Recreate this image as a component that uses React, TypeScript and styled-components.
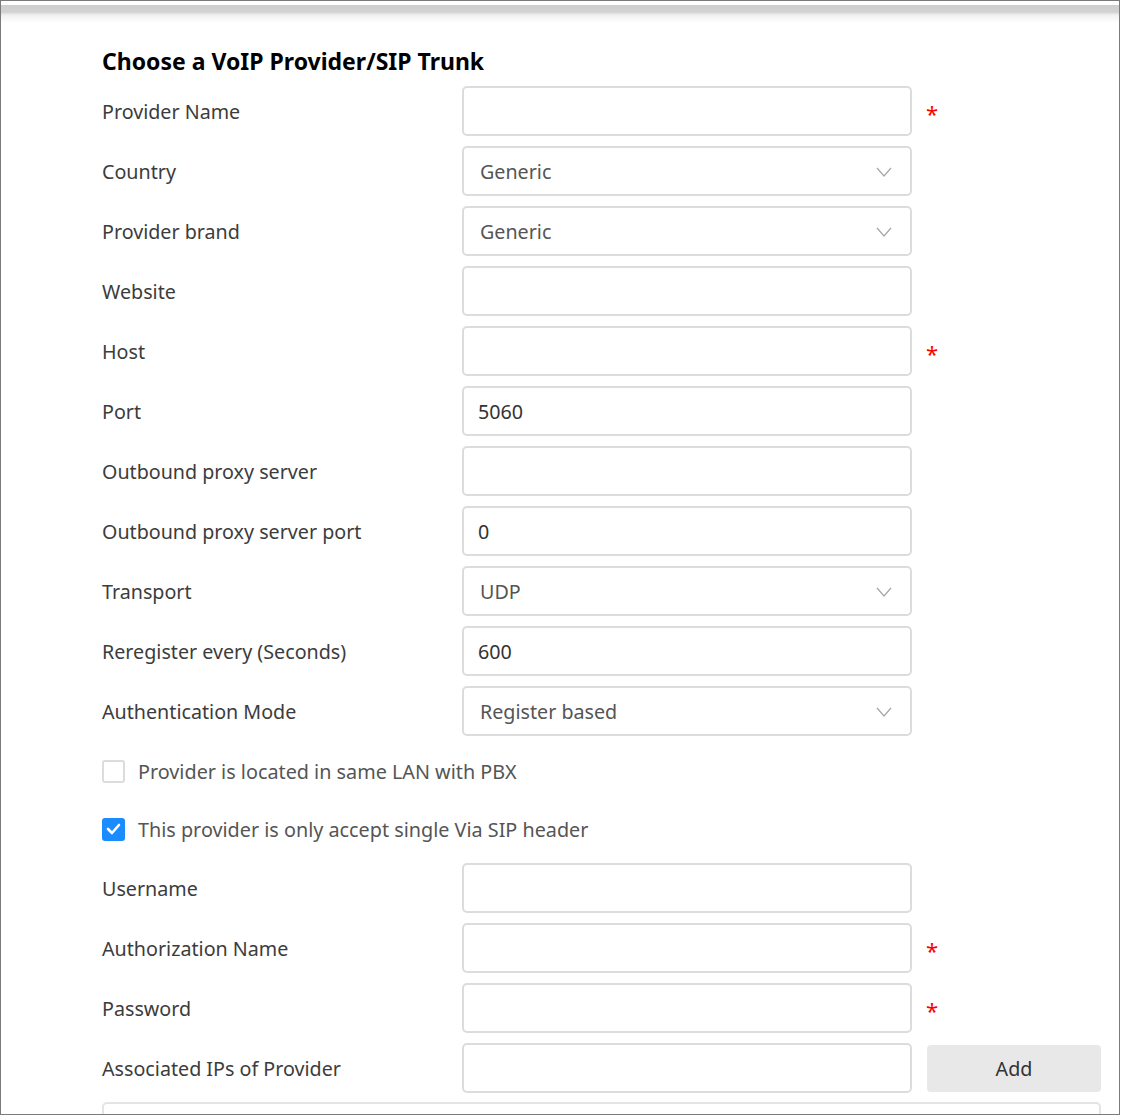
import React from "react";
import styled, { createGlobalStyle } from "styled-components";

const Global = createGlobalStyle`
  html, body { margin: 0; padding: 0; background: #fff; }
  body { font-family: "Segoe UI", "Noto Sans", "Open Sans", sans-serif; }
  * { box-sizing: border-box; }
`;

const Frame = styled.div`
  width: 1120px;
  height: 1115px;
  border: 1px solid #7a7a7a;
  overflow: hidden;
  background: #fff;
`;

const TopBand = styled.div`
  height: 18px;
  margin-top: 4px;
  background: linear-gradient(to bottom, #cfcfcf 0, #d2d2d2 7px, #f0f0f0 10px, #ffffff 18px);
`;

const Content = styled.div`
  padding-left: 101px;
`;

const Title = styled.h2`
  margin: 23px 0 10px;
  font-size: 23px;
  line-height: 30px;
  font-weight: 700;
  color: #000;
`;

const Form = styled.div`
  display: grid;
  grid-template-columns: 360px 450px 190px;
  row-gap: 10px;
  align-items: center;
`;

const Label = styled.div`
  font-size: 19.7px;
  color: #3c3c3c;
  line-height: 48px;
  padding-top: 2px;
`;

const TextInput = styled.div`
  height: 50px;
  border: 2px solid #dcdcdc;
  border-radius: 5px;
  padding: 1px 14px 0;
  display: flex;
  align-items: center;
  font-size: 19.7px;
  color: #333;
`;

const Select = styled(TextInput)`
  padding: 1px 18px 0 16px;
  justify-content: space-between;
  color: #555;
`;

const Side = styled.div`
  display: flex;
  align-items: center;
  height: 50px;
`;

const Required = styled.span`
  margin-left: 14px;
  color: #f00;
  font-size: 22px;
  line-height: 1;
  padding-top: 4px;
`;

const AddButton = styled.button`
  margin-left: 15px;
  width: 174px;
  height: 47px;
  border: none;
  border-radius: 4px;
  background: #e8e8e8;
  font-family: inherit;
  font-size: 19.7px;
  color: #333;
  padding: 1px 0 0;
`;

const CheckRow = styled.label<{ $first?: boolean }>`
  grid-column: 1 / 4;
  height: 48px;
  margin-top: ${(p) => (p.$first ? "1px" : "0")};
  display: flex;
  align-items: center;
  gap: 13px;
  font-size: 19.8px;
  color: #555;
`;

const Box = styled.span<{ $checked?: boolean }>`
  width: 23px;
  height: 23px;
  border-radius: 3px;
  border: ${(p) => (p.$checked ? "none" : "2px solid #dcdcdc")};
  background: ${(p) => (p.$checked ? "#1a8cff" : "#fff")};
  display: flex;
  align-items: center;
  justify-content: center;
`;

const BottomBox = styled.div`
  margin-top: 9px;
  width: 999px;
  height: 60px;
  border: 2px solid #e4e4e4;
  border-radius: 5px;
`;

const Chevron = () => (
  <svg width="16" height="10" viewBox="0 0 16 10">
    <polyline points="1,1 8,9 15,1" fill="none" stroke="#a8a8a8" strokeWidth="1.3" />
  </svg>
);

const Check = () => (
  <svg width="15" height="12" viewBox="0 0 15 12">
    <polyline points="2,6 6,10 13,2" fill="none" stroke="#fff" strokeWidth="2.6" strokeLinecap="round" strokeLinejoin="round" />
  </svg>
);

type Field = { label: string; value?: string; select?: boolean; required?: boolean };

const top: Field[] = [
  { label: "Provider Name", required: true },
  { label: "Country", value: "Generic", select: true },
  { label: "Provider brand", value: "Generic", select: true },
  { label: "Website" },
  { label: "Host", required: true },
  { label: "Port", value: "5060" },
  { label: "Outbound proxy server" },
  { label: "Outbound proxy server port", value: "0" },
  { label: "Transport", value: "UDP", select: true },
  { label: "Reregister every (Seconds)", value: "600" },
  { label: "Authentication Mode", value: "Register based", select: true },
];

const bottom: Field[] = [
  { label: "Username" },
  { label: "Authorization Name", required: true },
  { label: "Password", required: true },
];

const Row = ({ f }: { f: Field }) => (
  <>
    <Label>{f.label}</Label>
    {f.select ? (
      <Select>
        <span>{f.value}</span>
        <Chevron />
      </Select>
    ) : (
      <TextInput>{f.value}</TextInput>
    )}
    <Side>{f.required && <Required>*</Required>}</Side>
  </>
);

export default function App() {
  return (
    <>
      <Global />
      <Frame>
        <TopBand />
        <Content>
          <Title>Choose a VoIP Provider/SIP Trunk</Title>
          <Form>
            {top.map((f) => (
              <Row key={f.label} f={f} />
            ))}
            <CheckRow $first>
              <Box />
              Provider is located in same LAN with PBX
            </CheckRow>
            <CheckRow>
              <Box $checked>
                <Check />
              </Box>
              This provider is only accept single Via SIP header
            </CheckRow>
            {bottom.map((f) => (
              <Row key={f.label} f={f} />
            ))}
            <Label>Associated IPs of Provider</Label>
            <TextInput />
            <Side>
              <AddButton>Add</AddButton>
            </Side>
          </Form>
          <BottomBox />
        </Content>
      </Frame>
    </>
  );
}
